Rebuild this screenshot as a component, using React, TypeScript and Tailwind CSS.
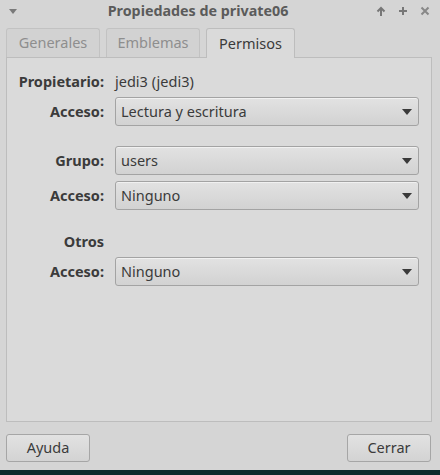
import React from 'react';

function Select({ value }: { value: string }) {
  return (
    <div className="flex h-[29px] flex-1 items-center justify-between rounded-[3px] border border-[#a3a3a3] bg-gradient-to-b from-[#e2e2e2] to-[#d2d2d2] pl-[5px] pr-[6px] text-[14.5px] text-[#3b3b3b] shadow-[inset_0_1px_0_rgba(255,255,255,0.5)]">
      <span>{value}</span>
      <svg width="10" height="6" viewBox="0 0 10 6" className="mt-[1px]">
        <polygon points="0,0 10,0 5,6" fill="#3a3a3a" />
      </svg>
    </div>
  );
}

function Row({ label, children }: { label: string; children: React.ReactNode }) {
  return (
    <div className="flex items-center">
      <div className="w-[97px] shrink-0 text-right text-[14.5px] font-bold text-[#3b3b3b]">{label}</div>
      <div className="ml-[11px] flex flex-1">{children}</div>
    </div>
  );
}

export default function App() {
  const tabs = ['Generales', 'Emblemas', 'Permisos']

  return (
    <div className="flex h-[475px] w-[440px] flex-col bg-[#d5d5d5] font-['Noto_Sans',sans-serif]">
      {/* title bar */}
      <div className="flex h-[22px] items-center px-[8px] text-[#5b5b5b]">
        <svg width="10" height="6" viewBox="0 0 10 6" className="mt-[1px]">
          <polygon points="1,0 9,0 5,5" fill="#7a7a7a" />
        </svg>
        <div className="flex-1 pl-[2px] text-center text-[14.3px] font-bold">Propiedades de private06</div>
        <div className="flex items-center gap-[12px] pr-[2px] text-[#7a7a7a]">
          <svg width="10" height="11" viewBox="0 0 10 11">
            <path d="M5 10V2M1.5 5.5L5 2l3.5 3.5" stroke="#777" strokeWidth="2" fill="none" />
          </svg>
          <svg width="10" height="10" viewBox="0 0 10 10">
            <path d="M5 1v8M1 5h8" stroke="#777" strokeWidth="2" fill="none" />
          </svg>
          <svg width="10" height="10" viewBox="0 0 10 10">
            <path d="M1.5 1.5l7 7M8.5 1.5l-7 7" stroke="#888" strokeWidth="2" fill="none" />
          </svg>
        </div>
      </div>

      {/* tabs */}
      <div className="mt-[6px] flex h-[29px] items-end gap-[6px] pl-[6px]">
        {tabs.map((t) => (
          <div
            key={t}
            className={
              t === 'Permisos'
                ? 'relative z-10 -mb-px flex h-[30px] w-[89px] items-center justify-center rounded-t-[3px] border border-b-0 border-[#bdbdbd] bg-[#dadada] text-[14.5px] text-[#3b3b3b]'
                : 'flex h-[29px] w-[94px] items-center justify-center rounded-t-[3px] border border-b-0 border-[#c2c2c2] bg-[#d2d2d2] text-[14.5px] text-[#8e8e8e]'
            }
          >
            {t}
          </div>
        ))}
      </div>

      {/* panel */}
      <div className="ml-[6px] mr-[8px] flex h-[365px] flex-col border border-[#bdbdbd] bg-[#dadada] pr-[12px] pt-[12px]">
        <div className="flex h-[24px] items-center">
          <div className="w-[97px] shrink-0 text-right text-[14.5px] font-bold text-[#3b3b3b]">Propietario:</div>
          <div className="ml-[11px] text-[14.5px] text-[#3b3b3b]">jedi3 (jedi3)</div>
        </div>
        <div className="mt-[3px]">
          <Row label="Acceso:"><Select value="Lectura y escritura" /></Row>
        </div>
        <div className="mt-[20px]">
          <Row label="Grupo:"><Select value="users" /></Row>
        </div>
        <div className="mt-[6px]">
          <Row label="Acceso:"><Select value="Ninguno" /></Row>
        </div>
        <div className="mt-[20px] flex h-[24px] items-center">
          <div className="w-[97px] shrink-0 text-right text-[14.5px] font-bold text-[#3b3b3b]">Otros</div>
        </div>
        <div className="mt-[3px]">
          <Row label="Acceso:"><Select value="Ninguno" /></Row>
        </div>
      </div>

      {/* buttons */}
      <div className="mt-[12px] flex justify-between pl-[6px] pr-[9px]">
        <button className="h-[28px] w-[84px] rounded-[3px] border border-[#a6a6a6] bg-gradient-to-b from-[#e2e2e2] to-[#d3d3d3] text-[14.5px] text-[#3b3b3b]">
          Ayuda
        </button>
        <button className="h-[28px] w-[84px] rounded-[3px] border border-[#a6a6a6] bg-gradient-to-b from-[#e2e2e2] to-[#d3d3d3] text-[14.5px] text-[#3b3b3b]">
          Cerrar
        </button>
      </div>

      <div className="mt-auto h-[5px] bg-[#0d2b2b]" />
    </div>
  )
}
